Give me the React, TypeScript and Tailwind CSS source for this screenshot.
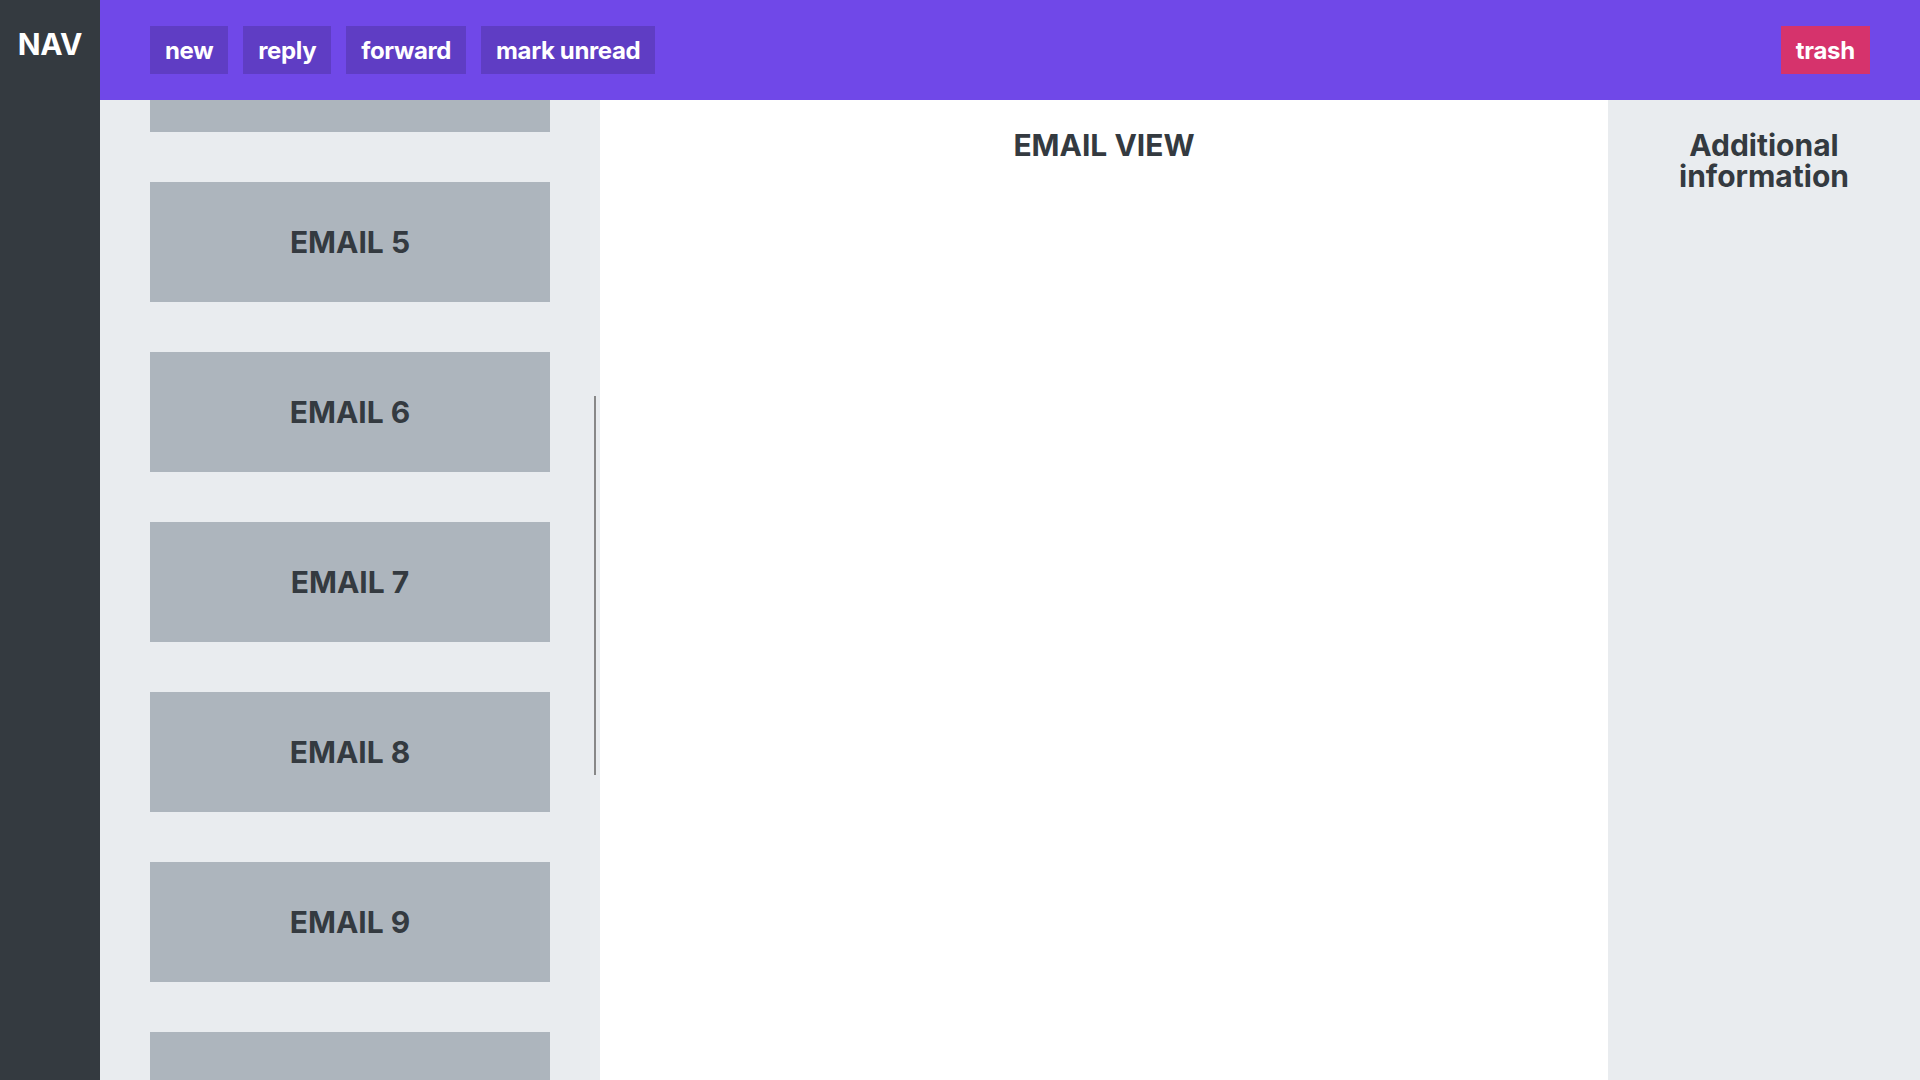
import React, { useLayoutEffect, useRef } from 'react';

const emails = Array.from({ length: 14 }, (_, i) => `EMAIL ${i + 1}`);

const headerButtons = ['new', 'reply', 'forward', 'mark unread'];

const App = () => {
  const listRef = useRef<HTMLDivElement>(null);

  useLayoutEffect(() => {
    if (listRef.current) listRef.current.scrollTop = 765;
  }, []);

  return (
    <div className="flex h-screen w-full overflow-hidden font-['Inter','Liberation_Sans',sans-serif] text-[#343a40]">
      <aside className="w-[100px] shrink-0 bg-[#343a40]">
        <h1 className="pt-[26px] text-center text-[30px] font-bold leading-[36px] tracking-[-0.01em] text-white">NAV</h1>
      </aside>

      <div className="flex min-w-0 flex-1 flex-col">
        <header className="flex h-[100px] shrink-0 items-center justify-between bg-[#7048e8] px-[50px]">
          <div className="flex gap-[15px]">
            {headerButtons.map((label) => (
              <button
                key={label}
                type="button"
                className="h-[48px] bg-[#5f3dc4] px-[15px] pt-[2px] text-[24px] font-bold leading-[32px] tracking-[-0.015em] text-white"
              >
                {label}
              </button>
            ))}
          </div>
          <button
            type="button"
            className="h-[48px] bg-[#d6336c] px-[15px] pt-[2px] text-[24px] font-bold leading-[32px] tracking-[-0.01em] text-white"
          >
            trash
          </button>
        </header>

        <div className="flex min-h-0 flex-1">
          <div className="relative flex w-[500px] shrink-0 bg-[#e9ecef]">
            <div ref={listRef} className="flex-1 overflow-y-auto [scrollbar-width:none]">
              <div className="flex flex-col gap-[50px] pb-[35px] pl-[50px] pt-[167px]">
                {emails.map((email) => (
                  <div
                    key={email}
                    className="flex h-[120px] w-[400px] shrink-0 items-center justify-center bg-[#adb5bd] text-[30px] font-bold"
                  >
                    {email}
                  </div>
                ))}
              </div>
            </div>
            {/* scrollbar thumb */}
            <div className="absolute left-[494px] top-[296px] h-[379px] w-[2px] bg-[#888888]" />
          </div>

          <main className="flex-1 bg-white pt-[30px]">
            <h2 className="text-center text-[30px] font-bold leading-[31px]">EMAIL VIEW</h2>
          </main>

          <aside className="w-[312px] shrink-0 bg-[#e9ecef] px-4 pt-[30px]">
            <h2 className="text-center text-[30px] font-bold leading-[31px]">Additional information</h2>
          </aside>
        </div>
      </div>
    </div>
  );
};

export default App;
